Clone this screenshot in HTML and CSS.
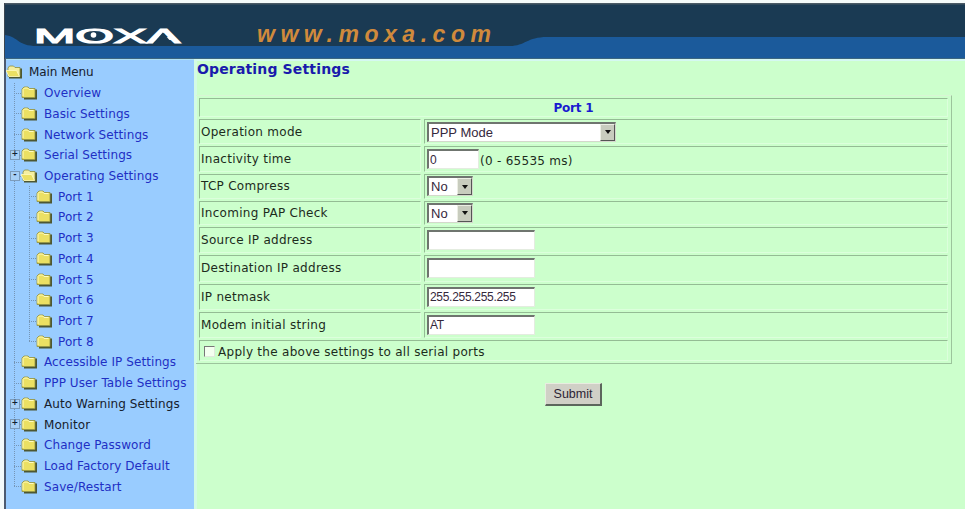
FILE: index.html
```html
<!DOCTYPE html>
<html lang="en">

<head>
    <meta charset="UTF-8">
    <title>Operating Settings</title>
    <link rel="stylesheet" href="styles.css">
</head>

<body>
    <!-- shared icons -->
    <svg class="defs" width="0" height="0">
        <symbol id="folder" viewBox="0 0 16 14">
            <path d="M3 12.5h12V3.5" fill="none" stroke="#4d5732" stroke-width="2"/>
            <path d="M1 11.5V3l2-2h4l1.500 1.500H14v9z" fill="#ebe063" stroke="#8f8f3c" stroke-width=".8"/>
            <path d="M2 10V3.500L3.500 2h3L8 3.500h4.500" fill="none" stroke="#fffbc0"/>
        </symbol>
        <symbol id="folder-open" viewBox="0 0 16 14">
            <path d="M3 12.5h12V3.5" fill="none" stroke="#4d5732" stroke-width="2"/>
            <path d="M2 11.500V3l1.500-2h4L9 2.500h5v9z" fill="#f5efa0" stroke="#8f8f3c" stroke-width=".8"/>
            <path d="M0 5.500h10.500l3 6H3z" fill="#ebe063" stroke="#fffbc0" stroke-width=".8"/>
        </symbol>
    </svg>

    <header class="banner">
        <svg width="960" height="56" viewBox="0 0 960 56">
            <rect width="960" height="56" fill="#1b5a9b"/>
            <path d="M0 0H960V34H542C522 34 520 43 505 43H32C12 43 14 34 0 32z" fill="#1a3a53"/>
            <rect width="960" height="1.500" fill="#4a5a66"/>
            <rect y="55" width="960" height="1" fill="#3d6680"/>
            <text class="logo" x="29" y="39.500" textLength="146" lengthAdjust="spacingAndGlyphs">MOXA</text>
            <path d="M148 40.500L157.800 29.500L167.500 40.500z" fill="#1a3a53"/>
            <circle cx="88.500" cy="32" r="2.800" fill="#fff"/>
            <text class="url" x="252" y="39" textLength="234">www.moxa.com</text>
        </svg>
    </header>

    <div class="page">
        <nav class="menu">
            <div class="item root"><svg><use href="#folder-open"/></svg><span>Main Menu</span></div>
            <ul class="tree">
                <li class="item"><svg><use href="#folder"/></svg><a>Overview</a></li>
                <li class="item"><svg><use href="#folder"/></svg><a>Basic Settings</a></li>
                <li class="item"><svg><use href="#folder"/></svg><a>Network Settings</a></li>
                <li class="item plus"><svg><use href="#folder"/></svg><a>Serial Settings</a></li>
                <li class="item minus"><svg><use href="#folder-open"/></svg><a>Operating Settings</a></li>
                <li>
                    <ul class="tree ports">
                        <li class="item"><svg><use href="#folder"/></svg><a>Port 1</a></li>
                        <li class="item"><svg><use href="#folder"/></svg><a>Port 2</a></li>
                        <li class="item"><svg><use href="#folder"/></svg><a>Port 3</a></li>
                        <li class="item"><svg><use href="#folder"/></svg><a>Port 4</a></li>
                        <li class="item"><svg><use href="#folder"/></svg><a>Port 5</a></li>
                        <li class="item"><svg><use href="#folder"/></svg><a>Port 6</a></li>
                        <li class="item"><svg><use href="#folder"/></svg><a>Port 7</a></li>
                        <li class="item"><svg><use href="#folder"/></svg><a>Port 8</a></li>
                    </ul>
                </li>
                <li class="item"><svg><use href="#folder"/></svg><a>Accessible IP Settings</a></li>
                <li class="item"><svg><use href="#folder"/></svg><a>PPP User Table Settings</a></li>
                <li class="item plus"><svg><use href="#folder"/></svg><span>Auto Warning Settings</span></li>
                <li class="item plus"><svg><use href="#folder"/></svg><span>Monitor</span></li>
                <li class="item"><svg><use href="#folder"/></svg><a>Change Password</a></li>
                <li class="item"><svg><use href="#folder"/></svg><a>Load Factory Default</a></li>
                <li class="item"><svg><use href="#folder"/></svg><a>Save/Restart</a></li>
            </ul>
        </nav>

        <main class="content">
            <h1>Operating Settings</h1>
            <form>
                <table class="settings">
                    <colgroup><col class="label-col"><col></colgroup>
                    <tr class="head"><th colspan="2">Port 1</th></tr>
                    <tr class="r25"><td>Operation mode</td><td><div class="select wide"><span>PPP Mode</span><i></i></div></td></tr>
                    <tr class="r26"><td>Inactivity time</td><td><div class="field"><input class="short" type="text" value="0"><span>(0 - 65535 ms)</span></div></td></tr>
                    <tr class="r24"><td>TCP Compress</td><td><div class="select"><span>No</span><i></i></div></td></tr>
                    <tr class="r24"><td>Incoming PAP Check</td><td><div class="select"><span>No</span><i></i></div></td></tr>
                    <tr class="r26"><td>Source IP address</td><td><input type="text"></td></tr>
                    <tr class="r26"><td>Destination IP address</td><td><input type="text"></td></tr>
                    <tr class="r26"><td>IP netmask</td><td><input type="text" value="255.255.255.255"></td></tr>
                    <tr class="r26"><td>Modem initial string</td><td><input type="text" value="AT"></td></tr>
                    <tr class="apply"><td colspan="2"><label><b class="check"></b>Apply the above settings to all serial ports</label></td></tr>
                </table>
                <button class="submit" type="button">Submit</button>
            </form>
        </main>
    </div>
</body>

</html>
```
FILE: styles.css
```css
* {
    margin: 0;
    padding: 0;
    box-sizing: border-box;
}

body {
    width: 965px;
    height: 509px;
    padding: 3px 0 0 4px;
    overflow: hidden;
    background: #f4fafa;
    font-family: Verdana, "DejaVu Sans", sans-serif;
    font-size: 12px;
    color: #1c2b1c;
}

.defs {
    position: absolute;
}

/* Banner */
.banner {
    height: 56px;
    border-left: 1px solid #3a4650;
}

.banner svg {
    display: block;
}

.logo {
    font-family: "Liberation Sans", Arial, sans-serif;
    font-size: 21px;
    fill: #fff;
    stroke: #fff;
    stroke-width: 1.1px;
}

.url {
    font-family: "Liberation Sans", Arial, sans-serif;
    font-size: 23px;
    font-weight: bold;
    font-style: italic;
    fill: #d08a3c;
}

.page {
    display: flex;
    height: 450px;
    border-left: 2px solid #4c5a70;
}

/* Tree menu */
.menu {
    width: 188px;
    padding-top: 2px;
    background: #99ccff;
    border-top: 1px solid #aee0f5;
    white-space: nowrap;
}

.tree {
    list-style: none;
    margin-left: 8px;
    background: repeating-linear-gradient(#7595b5 0 1px, transparent 1px 2px) 0 0 / 1px calc(100% - 10px) no-repeat;
}

.ports {
    margin-left: 15px;
}

.item {
    display: flex;
    align-items: center;
    height: 20.72px;
    position: relative;
    padding-left: 7px;
    font-size: 12px;
    letter-spacing: .08px;
}

.item svg {
    width: 16px;
    height: 14px;
    margin-right: 7px;
    flex: none;
}

.ports .item svg {
    margin-right: 6px;
}

.item a {
    color: #1f2fc4;
}

.item span {
    color: #16202c;
}

.item::before {
    content: "";
    position: absolute;
    left: 0;
    top: 10px;
    width: 7px;
    border-top: 1px dotted #7595b5;
}

.root {
    padding-left: 0;
    letter-spacing: -.1px;
}

.root::before {
    display: none;
}

/* expand boxes sit on the tree line */
.plus::after,
.minus::after {
    content: "+";
    position: absolute;
    left: -4px;
    top: 5px;
    width: 8px;
    height: 8px;
    border: 1px solid #7c9cbc;
    background: #a8d0f6;
    color: #102030;
    font: bold 8px/6px "DejaVu Sans", sans-serif;
    text-align: center;
}

.minus::after {
    content: "-";
}

/* Right side */
.content {
    flex: 1;
    background: #ccffcc;
    border-top: 2px solid #d5f8f2;
    border-left: 3px solid #d3fbe4;
}

h1 {
    height: 34px;
    color: #1a1aac;
    font-size: 14px;
    line-height: 17px;
    letter-spacing: .15px;
}

.settings {
    width: 756px;
    margin-left: -1px;
    border: 1px solid #d9f5d5;
    border-left: 0;
    border-right-color: #9cc49c;
    border-bottom-color: #9cc49c;
    border-spacing: 3px 2px;
    table-layout: fixed;
    letter-spacing: .28px;
}

.label-col {
    width: 222px;
}

.settings td,
.settings th {
    padding: 0 1px;
    border: 1px solid #94bc94;
    border-right-color: #dcffdc;
    border-bottom-color: #dcffdc;
    vertical-align: middle;
}

.settings td + td {
    padding-left: 2px;
}

.settings th {
    color: #1a1ad0;
    font-size: 12px;
    letter-spacing: -.2px;
}

.head {
    height: 19px;
}

.r24 {
    height: 24.5px;
}

.r25 {
    height: 25px;
}

.r26 {
    height: 26.2px;
}

.apply {
    height: 21px;
}

.settings .apply td {
    padding-top: 3px;
}

input {
    display: block;
    width: 108px;
    height: 20px;
    padding-left: 1px;
    border: 2px solid #6f756f;
    border-right: 1px solid #e4ece0;
    border-bottom: 1px solid #e4ece0;
    background: #fff;
    font: 12px "Liberation Sans", Arial, sans-serif;
    letter-spacing: -.3px;
    color: #35283c;
}

.short {
    width: 52px;
}

.field {
    display: flex;
    align-items: center;
    gap: 1px;
}

.field span {
    padding-top: 4px;
}

.select {
    display: flex;
    width: 46px;
    height: 20px;
    border: 2px solid #6f756f;
    border-right: 1px solid #d4d8cc;
    border-bottom: 1px solid #d4d8cc;
    background: #fff;
    font: 13px/17px "Liberation Sans", Arial, sans-serif;
    letter-spacing: 0;
    color: #35283c;
}

.select.wide {
    width: 189px;
}

.select span {
    flex: 1;
    padding-left: 2px;
}

.select i {
    display: flex;
    align-items: center;
    justify-content: center;
    width: 15px;
    background: #c8ccbe;
    border: 1px solid #eceee4;
    border-right-color: #555;
    border-bottom-color: #555;
}

.select i::before {
    content: "";
    border: 3px solid transparent;
    border-top: 4px solid #111;
    border-bottom: 0;
}

label {
    display: flex;
    align-items: center;
    padding-left: 3px;
}

.check {
    width: 11px;
    height: 11px;
    margin-right: 3px;
    border: 1px solid #777;
    border-right-color: #e0e8dc;
    border-bottom-color: #e0e8dc;
    background: #f4fff0;
}

.submit {
    display: block;
    width: 57px;
    height: 23px;
    margin: 19px 0 0 348px;
    border: 1px solid #e8ece0;
    border-right: 2px solid #5c665c;
    border-bottom: 2px solid #5c665c;
    background: #d0d0c6;
    font: 12.500px "Liberation Sans", Arial, sans-serif;
    color: #2c2434;
}
```
